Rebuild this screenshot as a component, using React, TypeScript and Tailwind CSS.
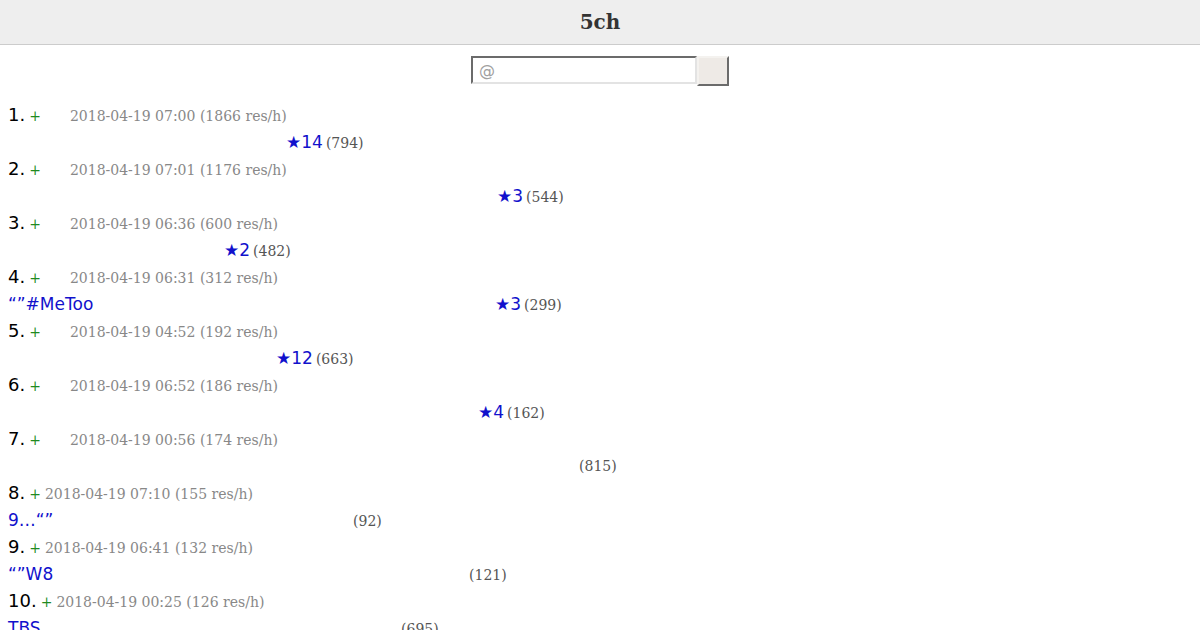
import React from "react";

type Thread = {
  no: number;
  spacer: boolean;
  date: string;
  speed: number;
  title: string;
  titleWidth: string;
  stars?: number;
  count: number;
};

const threads: Thread[] = [
  { no: 1, spacer: true, date: "2018-04-19 07:00", speed: 1866, title: "", titleWidth: "w-[278px]", stars: 14, count: 794 },
  { no: 2, spacer: true, date: "2018-04-19 07:01", speed: 1176, title: "", titleWidth: "w-[489px]", stars: 3, count: 544 },
  { no: 3, spacer: true, date: "2018-04-19 06:36", speed: 600, title: "", titleWidth: "w-[216px]", stars: 2, count: 482 },
  { no: 4, spacer: true, date: "2018-04-19 06:31", speed: 312, title: "“”#MeToo", titleWidth: "w-[487px]", stars: 3, count: 299 },
  { no: 5, spacer: true, date: "2018-04-19 04:52", speed: 192, title: "", titleWidth: "w-[268px]", stars: 12, count: 663 },
  { no: 6, spacer: true, date: "2018-04-19 06:52", speed: 186, title: "", titleWidth: "w-[470px]", stars: 4, count: 162 },
  { no: 7, spacer: true, date: "2018-04-19 00:56", speed: 174, title: "", titleWidth: "w-[571px]", count: 815 },
  { no: 8, spacer: false, date: "2018-04-19 07:10", speed: 155, title: "9…“”", titleWidth: "w-[345px]", count: 92 },
  { no: 9, spacer: false, date: "2018-04-19 06:41", speed: 132, title: "“”W8", titleWidth: "w-[461px]", count: 121 },
  { no: 10, spacer: false, date: "2018-04-19 00:25", speed: 126, title: "TBS", titleWidth: "w-[393px]", count: 695 },
];

const serif = "font-['DejaVu_Serif',serif]";
const sans = "font-['DejaVu_Sans',sans-serif]";

function Row({ t }: { t: Thread }) {
  return (
    <div>
      <div className={`h-[27px] leading-[27px] whitespace-nowrap flex items-baseline ${sans} text-[18px] text-black`}>
        <span>{t.no}.</span>
        <span className={`${serif} text-[14px] text-[#1f8a1f] ml-[4px]`}>+</span>
        {t.spacer && <span className="inline-block w-[25px]" />}
        <span className={`${serif} text-[14px] text-[#888888] ml-[4px]`}>
          {t.date} ({t.speed} res/h)
        </span>
      </div>
      <div className="h-[27px] pt-[1px] leading-[27px] whitespace-nowrap flex items-baseline">
        <a href="#" className={`inline-block ${t.titleWidth} ${sans} text-[17px] text-[#1111cc]`}>
          {t.title}
        </a>
        {t.stars !== undefined && (
          <span className={`${sans} text-[17px] text-[#1111cc] mr-[3px]`}>★{t.stars}</span>
        )}
        <span className={`${serif} text-[14px] text-[#555555]`}>({t.count})</span>
      </div>
    </div>
  );
}

export default function App() {
  return (
    <div className="w-[1200px] h-[630px] overflow-hidden bg-white">
      <header className="h-[45px] bg-[#eeeeee] border-b border-[#cccccc] flex items-center justify-center">
        <h1 className={`${serif} font-bold text-[20px] text-[#333333]`}>5ch</h1>
      </header>
      <form className="flex justify-center items-start mt-[11px]" onSubmit={e => e.preventDefault()}>
        <input
          type="text"
          placeholder="@"
          className={`w-[226px] h-[28px] px-[6px] ${sans} text-[16px] border-2 border-t-[#6b6b6b] border-l-[#6b6b6b] border-b-[#e3e3e3] border-r-[#e3e3e3] placeholder:text-[#a0a0a0] outline-none`}
        />
        <button
          type="submit"
          className="w-[32px] h-[30px] bg-[#eeeae6] border-2 border-t-[#f4f2ef] border-l-[#f4f2ef] border-b-[#6b6b6b] border-r-[#6b6b6b]"
        />
      </form>
      <div className="pl-[8px] mt-[15px]">
        {threads.map(t => (
          <Row key={t.no} t={t} />
        ))}
      </div>
    </div>
  );
}
